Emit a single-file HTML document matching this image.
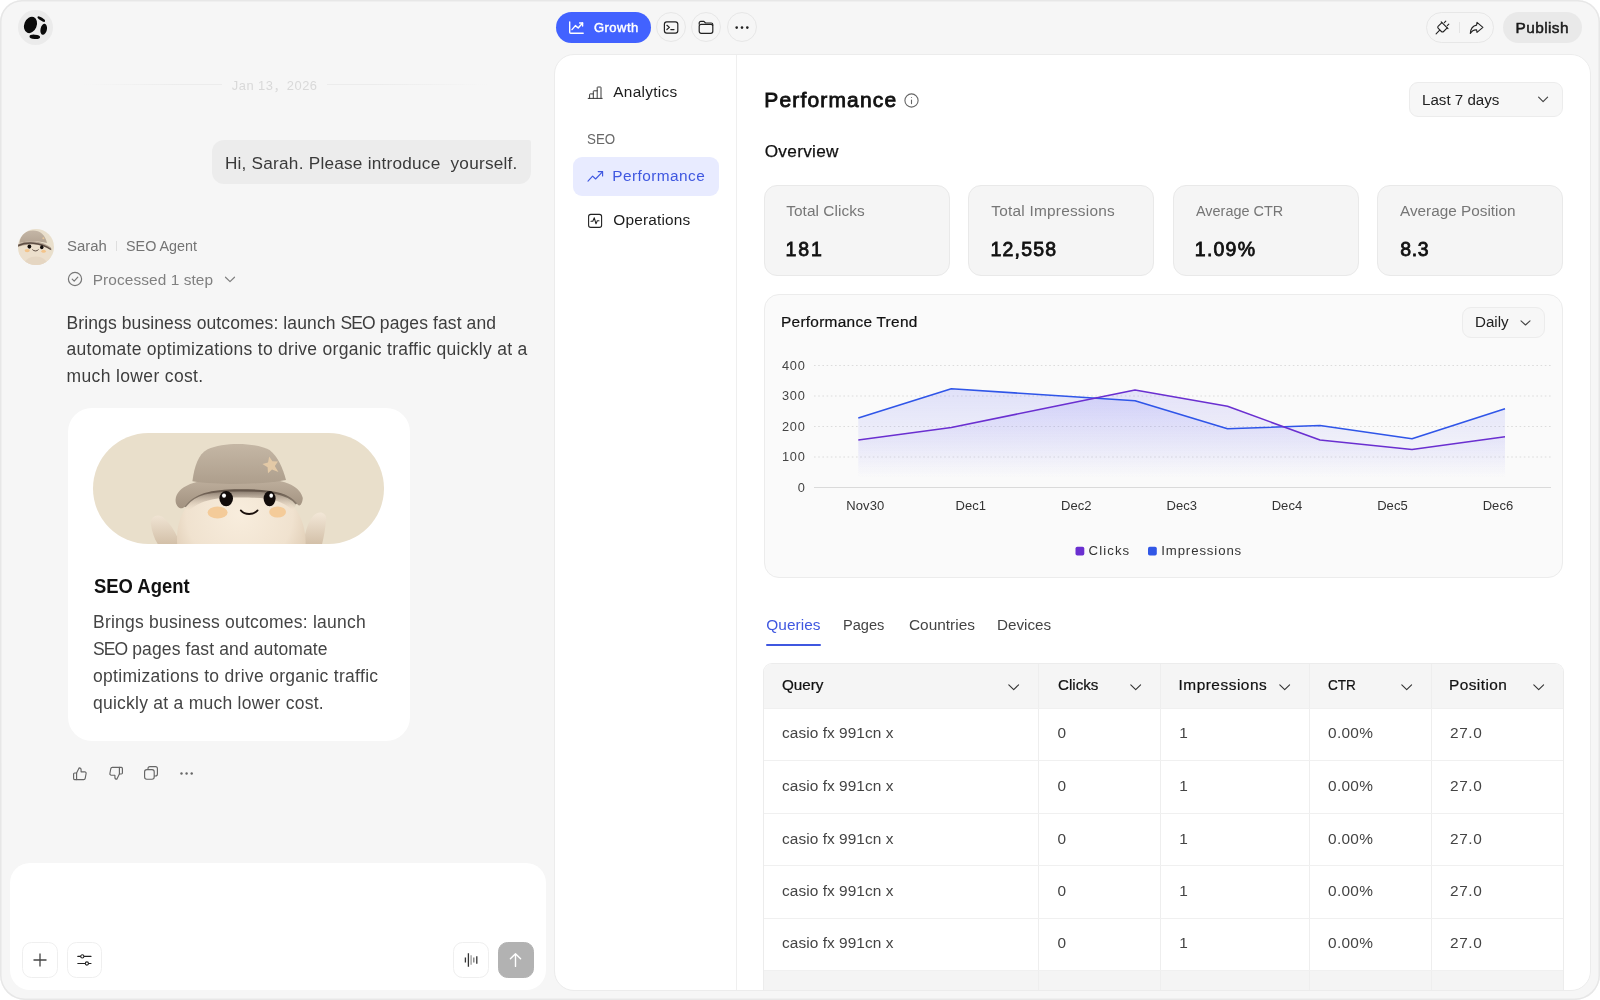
<!DOCTYPE html>
<html lang="en">
<head>
<meta charset="utf-8">
<title>Growth – Performance</title>
<style>
*{box-sizing:border-box;margin:0;padding:0}
html,body{width:1600px;height:1000px;overflow:hidden;background:#fff}
body{font-family:"Liberation Sans","Noto Sans CJK SC",sans-serif;color:#1a1a1a;position:relative;-webkit-font-smoothing:antialiased}
.abs{position:absolute}
#frame{will-change:transform;position:absolute;left:0;top:0;width:1600px;height:1000px;background:#f6f6f6;border-radius:22px 22px 25px 25px;overflow:hidden;box-shadow:inset 0 0 0 1.5px #e7e7e7}
.t{position:absolute;white-space:nowrap;line-height:1;transform-origin:0 50%}
svg{position:absolute;overflow:visible}
.seo{letter-spacing:-.9px}
/* top bar */
#logo{left:18px;top:10.2px;width:35.2px;height:35.2px;border-radius:50%;background:#ebebeb}
#growth{left:556px;top:12px;width:95px;height:31px;border-radius:16px;background:#4262ff}
.cbtn{top:12px;width:30px;height:30px;border-radius:50%;border:1px solid #e7e7e7;background:#f6f6f6}
#pillr{left:1426px;top:12px;width:67.5px;height:31px;border-radius:16px;border:1px solid #e7e7e7}
#publish{left:1502.5px;top:12px;width:79.5px;height:31px;border-radius:16px;background:#e9e9e9}
/* chat */
#bubble{left:212px;top:140px;width:319px;height:44px;border-radius:12px 2px 12px 12px;background:#ececec}
#card{left:68px;top:408px;width:342px;height:333px;border-radius:24px;background:#fff}
#hero{left:93px;top:433px;width:291px;height:111px;border-radius:56px;background:#e9dfcb;overflow:hidden}
#input{left:10px;top:863px;width:536px;height:127px;border-radius:20px;background:#fff}
.sbtn{top:942px;width:35px;height:36px;border-radius:9.5px;border:1px solid #efefef;background:#fff}
/* main panel */
#panel{left:554px;top:54px;width:1037px;height:937px;border-radius:20px;background:#fff;border:1px solid #ececec;overflow:hidden}
#sidediv{left:736px;top:55px;width:1px;height:935px;background:#efefef}
#active{left:573px;top:157px;width:146px;height:39px;border-radius:9px;background:#e8ebff}
.stat{top:185px;width:186px;height:91px;border-radius:13px;background:#f5f5f5;border:1px solid #e9e9e9}
#chart{left:764px;top:294px;width:799px;height:284px;border-radius:15px;background:#fafafa;border:1px solid #ececec}
.sel{border-radius:9px;background:#f7f7f7;border:1px solid #ececec}
#table{left:763px;top:663px;width:801px;height:327px;border-radius:9px 9px 0 0;background:#fff;border:1px solid #ececec;border-bottom:0;overflow:hidden}
</style>
</head>
<body>
<div id="frame">
<!-- P1S -->
<!-- top bar -->
<div class="abs" id="logo"></div>
<svg style="left:0;top:0" width="60" height="50" viewBox="0 0 60 50">
  <ellipse cx="30.5" cy="24.9" rx="6.2" ry="8.5" transform="rotate(22 30.5 24.9)" fill="#0a0a0a"/>
  <ellipse cx="43.7" cy="29.3" rx="3.2" ry="5.55" transform="rotate(12 43.7 29.3)" fill="#0a0a0a"/>
  <ellipse cx="34.8" cy="36.8" rx="5.3" ry="2.15" transform="rotate(4 34.8 36.8)" fill="#0a0a0a"/>
  <ellipse cx="41.3" cy="19.05" rx="4.4" ry="1.5" transform="rotate(33 41.3 19.05)" fill="#0a0a0a"/>
</svg>
<div class="abs" id="growth"></div>
<svg style="left:568px;top:19px" width="17" height="17" viewBox="0 0 17 17" fill="none" stroke="#fff" stroke-width="1.4" stroke-linecap="round" stroke-linejoin="round">
  <path d="M1.7 3V13.2a1 1 0 0 0 1 1H15.2"/><path d="M4 10.6l3.4-4 2.8 2.4 4.4-5"/><path d="M11.6 4h3v3"/>
</svg>
<div class="abs cbtn" style="left:656px"></div>
<div class="abs cbtn" style="left:691px"></div>
<div class="abs cbtn" style="left:727px"></div>
<svg style="left:663px;top:20px" width="16" height="15" viewBox="0 0 16 15" fill="none" stroke="#222" stroke-width="1.2" stroke-linecap="round" stroke-linejoin="round">
  <rect x="1.4" y="1.9" width="13.4" height="11.2" rx="2.4"/><path d="M3.9 5.3l2.5 2.1-2.5 2.1"/><path d="M7.8 9.6h3.2"/>
</svg>
<svg style="left:698px;top:20px" width="16" height="15" viewBox="0 0 16 15" fill="none" stroke="#222" stroke-width="1.2" stroke-linecap="round" stroke-linejoin="round">
  <path d="M1.2 4.2V3a1.6 1.6 0 0 1 1.6-1.6h3.1l1.6 1.6h5.7a1.6 1.6 0 0 1 1.6 1.6v.6"/><rect x="1.2" y="4.3" width="13.6" height="9" rx="2"/>
</svg>
<svg style="left:735px;top:26px" width="14" height="3" viewBox="0 0 14 3" fill="#222"><circle cx="1.7" cy="1.6" r="1.3"/><circle cx="7" cy="1.6" r="1.3"/><circle cx="12.3" cy="1.6" r="1.3"/></svg>
<div class="abs" id="pillr"></div>
<div class="abs" style="left:1459px;top:22px;width:1px;height:11px;background:#e4e4e4"></div>
<svg style="left:0;top:0" width="1600" height="60" viewBox="0 0 1600 60" fill="none" stroke="#222" stroke-width="1.1" stroke-linecap="round" stroke-linejoin="round">
  <path d="M1441.2 21.8L1448 28.6"/><path d="M1441.9 22.6L1438.3 26.2Q1437.2 27.3 1438.3 28.4L1441.4 31.5Q1442.5 32.6 1443.6 31.5L1447.2 27.9"/><path d="M1444.3 22.6L1445.8 21.1M1447.3 25.6L1448.8 24.1M1439.7 30.2L1436.1 33.8"/>
  <path d="M1477 22.4L1482.9 27.3L1477 32.3L1476.6 29.9C1473.8 29.7 1471.8 30.9 1470.3 33.5C1470.6 28.7 1472.8 25.7 1476.6 25.1Z"/>
</svg>
<div class="abs" id="publish"></div>

<!-- chat -->
<div class="abs" style="left:84px;top:84px;width:138px;height:1px;background:linear-gradient(90deg,rgba(236,236,236,0),#ececec 70%)"></div>
<div class="abs" style="left:327px;top:84px;width:160px;height:1px;background:linear-gradient(90deg,#ececec 30%,rgba(236,236,236,0))"></div>
<div class="abs" id="bubble"></div>
<svg style="left:17.5px;top:228.5px" width="36" height="36" viewBox="0 0 36 36">
<defs><clipPath id="avc"><circle cx="18" cy="18" r="18"/></clipPath>
<linearGradient id="avh" x1="0" y1="2" x2="0" y2="15" gradientUnits="userSpaceOnUse"><stop offset="0" stop-color="#c3b5a5"/><stop offset="1" stop-color="#b3a392"/></linearGradient></defs>
<g clip-path="url(#avc)">
<rect width="36" height="36" fill="#e9dfcc"/>
<path d="M-1 37C-3 22 6 12 16 12C27 12 34 22 33 37Z" fill="#ecdfcc"/>
<path d="M4 38C6 30 14 26 22 28C28 30 30 34 30 38Z" fill="#e2d1bd" opacity=".7"/>
<path d="M1.5 14C2 6 8 1.5 15 1.5C22 1.5 27.5 6 29 14C20 11.5 10 11.5 1.5 14Z" fill="url(#avh)"/>
<path d="M-1 16C6 11 22 10.5 33 18.5L33.5 21.5C24 14 8 14 -1 18.5Z" fill="#b5a595"/>
<path d="M-0.5 16.8C8 12.8 22 12.6 33 20.5" fill="none" stroke="#5e4e44" stroke-width="1.5"/>
<ellipse cx="11.4" cy="17.6" rx="1.9" ry="2.1" fill="#120c0a"/>
<ellipse cx="23.8" cy="18.2" rx="1.7" ry="2" fill="#120c0a"/>
<ellipse cx="9.2" cy="21.6" rx="2.6" ry="1.6" fill="#f3c48a"/>
<ellipse cx="25.6" cy="22.2" rx="2.2" ry="1.5" fill="#f3c48a"/>
<path d="M14.6 20.8C16 22.4 19 22.4 20.3 20.8" fill="none" stroke="#3a2a22" stroke-width=".8" stroke-linecap="round"/>
<circle cx="25.4" cy="9.2" r="1" fill="#e8c79a"/>
</g>
</svg>

<div class="abs" style="left:116px;top:241px;width:1px;height:10px;background:#dedede"></div>
<svg style="left:67px;top:271px" width="16" height="16" viewBox="0 0 16 16" fill="none" stroke="#777" stroke-width="1.2" stroke-linecap="round" stroke-linejoin="round"><circle cx="8" cy="8" r="6.6"/><path d="M5.2 8.2l2 2 3.6-4"/></svg>
<svg style="left:224px;top:276px" width="12" height="7" viewBox="0 0 12 7" fill="none" stroke="#808080" stroke-width="1.2" stroke-linecap="round" stroke-linejoin="round"><path d="M1.5 1.2L6 5.6l4.5-4.4"/></svg>
<div class="abs" id="para1" style="left:66.5px;top:309.9px;width:490px;font-size:17.5px;line-height:26.6px;color:#3d3d3d;white-space:nowrap"><span class="ln" style="letter-spacing:.11px">Brings business outcomes: launch <span class="seo">SEO</span> pages fast and</span><br><span class="ln" style="letter-spacing:.28px">automate optimizations to drive organic traffic quickly at a</span><br><span class="ln" style="letter-spacing:.36px">much lower cost.</span></div>
<div class="abs" id="card"></div>
<div class="abs" id="hero"><svg style="left:0;top:0" width="291" height="111" viewBox="67 65 1455 555">
<defs>
<radialGradient id="hb" cx="800" cy="470" r="380" gradientUnits="userSpaceOnUse"><stop offset="0" stop-color="#f8eddd"/><stop offset=".7" stop-color="#f0e2cf"/><stop offset="1" stop-color="#dfccb4"/></radialGradient>
<linearGradient id="hh" x1="0" y1="110" x2="0" y2="330" gradientUnits="userSpaceOnUse"><stop offset="0" stop-color="#c6b8a6"/><stop offset="1" stop-color="#ac9d8b"/></linearGradient>
<linearGradient id="hbr" x1="0" y1="290" x2="0" y2="440" gradientUnits="userSpaceOnUse"><stop offset="0" stop-color="#bfb09e"/><stop offset="1" stop-color="#a29280"/></linearGradient>
<linearGradient id="hs" x1="0" y1="340" x2="0" y2="450" gradientUnits="userSpaceOnUse"><stop offset="0" stop-color="#4e4036" stop-opacity=".85"/><stop offset="1" stop-color="#cdb9a2" stop-opacity="0"/></linearGradient>
<linearGradient id="ha" x1="0" y1="460" x2="0" y2="620" gradientUnits="userSpaceOnUse"><stop offset="0" stop-color="#f3e8d8"/><stop offset="1" stop-color="#d3c0a8"/></linearGradient>
</defs>
<path d="M357 525C348 484 392 462 424 492C456 522 486 566 502 622L392 622C372 592 362 556 357 525Z" fill="url(#ha)"/>
<path d="M1232 502C1240 466 1200 448 1170 478C1142 508 1128 560 1118 622L1212 622C1222 584 1228 542 1232 502Z" fill="url(#ha)"/>
<path d="M488 622C476 470 560 322 800 318C1042 324 1134 474 1130 622Z" fill="url(#hb)"/>
<path d="M520 432C570 352 660 338 800 338C950 340 1040 358 1088 414L1066 452C1000 392 930 388 800 388C670 388 600 402 540 462Z" fill="url(#hs)"/>
<path d="M528 428C574 366 650 350 800 350C950 350 1040 364 1082 414" fill="none" stroke="#4a3c32" stroke-width="14" stroke-linecap="round" opacity=".55"/>
<path d="M480 398C488 336 560 292 800 284C1042 288 1102 336 1116 390C1114 424 1096 442 1084 412C1040 360 950 346 800 346C650 346 574 368 524 434C506 454 478 432 480 398Z" fill="url(#hbr)"/>
<path d="M564 306C574 232 592 172 640 146C722 110 880 112 950 150C992 182 1016 240 1032 300C900 324 700 326 564 306Z" fill="url(#hh)"/>
<path d="M948 182l16 24 28 2-16 22 18 30-32-12-20 18-2-30-26-16 28-8z" fill="#e3c9a6"/>
<ellipse cx="690" cy="462" rx="50" ry="30" fill="#f4c892" opacity=".9"/>
<ellipse cx="990" cy="460" rx="42" ry="28" fill="#f4c892" opacity=".9"/>
<ellipse cx="733" cy="393" rx="34" ry="38" fill="#120c0a"/>
<ellipse cx="950" cy="393" rx="30" ry="38" fill="#120c0a"/>
<ellipse cx="722" cy="378" rx="10" ry="11" fill="#fff"/>
<ellipse cx="958" cy="378" rx="9" ry="11" fill="#fff"/>
<path d="M806 452C826 476 870 476 890 452" fill="none" stroke="#1a100c" stroke-width="9" stroke-linecap="round"/>
</svg>
</div>
<div class="abs" id="para2" style="left:93px;top:609.3px;width:310px;font-size:17.5px;line-height:26.75px;color:#444;white-space:nowrap"><span class="ln" style="letter-spacing:.23px">Brings business outcomes: launch</span><br><span class="ln" style="letter-spacing:.12px"><span class="seo">SEO</span> pages fast and automate</span><br><span class="ln" style="letter-spacing:.3px">optimizations to drive organic traffic</span><br><span class="ln" style="letter-spacing:.25px">quickly at a much lower cost.</span></div>
<!-- reactions -->
<svg style="left:72px;top:765.6px" width="16" height="16" viewBox="0 0 16 16" fill="none" stroke="#666" stroke-width="1.15" stroke-linecap="round" stroke-linejoin="round"><path d="M4.6 7v6.6H2.6a1 1 0 0 1-1-1V8a1 1 0 0 1 1-1z"/><path d="M4.6 7l2.6-5.2c1.1 0 1.9.9 1.9 2v2h3.6a1.4 1.4 0 0 1 1.4 1.7l-.9 4.9a1.5 1.5 0 0 1-1.5 1.2H4.6"/></svg>
<svg style="left:108px;top:765px" width="16" height="16" viewBox="0 0 16 16" fill="none" stroke="#666" stroke-width="1.15" stroke-linecap="round" stroke-linejoin="round"><g transform="rotate(180 8 8)"><path d="M4.6 7v6.6H2.6a1 1 0 0 1-1-1V8a1 1 0 0 1 1-1z"/><path d="M4.6 7l2.6-5.2c1.1 0 1.9.9 1.9 2v2h3.6a1.4 1.4 0 0 1 1.4 1.7l-.9 4.9a1.5 1.5 0 0 1-1.5 1.2H4.6"/></g></svg>
<svg style="left:143px;top:765px" width="16" height="16" viewBox="0 0 16 16" fill="none" stroke="#666" stroke-width="1.15" stroke-linecap="round" stroke-linejoin="round"><rect x="1.6" y="4.6" width="9.6" height="9.6" rx="2.2"/><path d="M5 4.4V3.6a2 2 0 0 1 2-2h5.4a2 2 0 0 1 2 2V9a2 2 0 0 1-2 2h-1"/></svg>
<svg style="left:180px;top:772px" width="13" height="3" viewBox="0 0 13 3" fill="#666"><circle cx="1.5" cy="1.5" r="1.2"/><circle cx="6.6" cy="1.5" r="1.2"/><circle cx="11.7" cy="1.5" r="1.2"/></svg>
<!-- input -->
<div class="abs" id="input"></div>
<div class="abs sbtn" style="left:22px;width:36px"></div>
<div class="abs sbtn" style="left:67px;width:35px"></div>
<div class="abs sbtn" style="left:453px;width:36px"></div>
<div class="abs sbtn" style="left:498px;width:36px;background:#b2b2b2;border-color:#b2b2b2"></div>
<svg style="left:33px;top:953px" width="14" height="14" viewBox="0 0 14 14" fill="none" stroke="#444" stroke-width="1.3" stroke-linecap="butt"><path d="M7 0.5v13M0.5 7h13"/></svg>
<svg style="left:77px;top:952px" width="15" height="15" viewBox="0 0 15 15" fill="none" stroke="#222" stroke-width="1.1" stroke-linecap="round"><path d="M0.8 4.4h3M7 4.4H14M0.8 11.5h7.6M11.4 11.5H14"/><circle cx="5.3" cy="4.4" r="1.6" fill="#fff"/><circle cx="9.9" cy="11.5" r="1.6" fill="#fff"/></svg>
<svg style="left:464px;top:952px" width="14" height="16" viewBox="0 0 14 16" fill="none" stroke="#333" stroke-width="1.3" stroke-linecap="butt"><path d="M1.4 5.4v5.2M4.4 1.2v13.6M12.8 4.2v7.6"/><path d="M7.1 3.2v9.6" stroke="#9a9a9a"/><path d="M9.8 5.4v5.2" stroke="#777"/></svg>
<svg style="left:508px;top:952px" width="15" height="16" viewBox="0 0 15 16" fill="none" stroke="#fff" stroke-width="1.4" stroke-linecap="round" stroke-linejoin="round"><path d="M7.5 14.4V1.8M2.4 6.8l5.1-5.1 5.1 5.1"/></svg>
<!-- P1E -->
<!-- P2S -->
<div class="abs" id="panel"></div>
<div class="abs" id="sidediv"></div>
<svg style="left:587px;top:85px" width="16" height="15" viewBox="0 0 16 15" fill="none" stroke="#3a3a3a" stroke-width="1" stroke-linecap="round" stroke-linejoin="round"><path d="M1.2 13.4h14"/><path d="M2.6 13.4V9.4a.5.5 0 0 1 .5-.5h3.2"/><path d="M6.3 13.4V6.3a.5.5 0 0 1 .5-.5h3.4"/><path d="M10.2 13.4V2.5a.5.5 0 0 1 .5-.5h2.8a.5.5 0 0 1 .5.5V13.4"/></svg>
<div class="abs" id="active"></div>
<svg style="left:587px;top:170px" width="17" height="13" viewBox="0 0 17 13" fill="none" stroke="#3f57e0" stroke-width="1.15" stroke-linecap="round" stroke-linejoin="round"><path d="M1 11.2l4.6-5 3 2.8L15.4 1.8"/><path d="M11.2 1.6h4.4v4.4"/></svg>
<svg style="left:587px;top:213px" width="16" height="16" viewBox="0 0 16 16" fill="none" stroke="#222" stroke-width="1.1" stroke-linecap="round" stroke-linejoin="round"><rect x="1.6" y="1.4" width="13" height="13" rx="2.2"/><path d="M4 8.2h1.8l1.5-3.4 1.7 6 1.3-3h1.7"/></svg>
<svg style="left:904px;top:93px" width="15" height="15" viewBox="0 0 15 15" fill="none" stroke="#666" stroke-width="1.1" stroke-linecap="round"><circle cx="7.5" cy="7.5" r="6.6"/><path d="M7.5 7v3.6"/><circle cx="7.5" cy="4.6" r="0.5" fill="#666" stroke="none"/></svg>
<div class="abs sel" style="left:1409px;top:82px;width:154px;height:35px"></div>
<svg style="left:1537px;top:96px" width="12" height="7" viewBox="0 0 12 7" fill="none" stroke="#444" stroke-width="1.15" stroke-linecap="round" stroke-linejoin="round"><path d="M1.6 1.2L6.1 5.7l4.5-4.5"/></svg>
<div class="abs stat" style="left:764px"></div>
<div class="abs stat" style="left:968px"></div>
<div class="abs stat" style="left:1173px"></div>
<div class="abs stat" style="left:1377.4px"></div>
<div class="abs" id="chart"></div>
<div class="abs sel" style="left:1462px;top:307px;width:83px;height:31px"></div>
<svg style="left:1520px;top:320px" width="11" height="6" viewBox="0 0 11 6" fill="none" stroke="#444" stroke-width="1.1" stroke-linecap="round" stroke-linejoin="round"><path d="M1 0.8L5.5 5l4.5-4.2"/></svg>
<svg style="left:0;top:0" width="1600" height="1000" viewBox="0 0 1600 1000">
<defs><linearGradient id="gb" x1="0" y1="388" x2="0" y2="478" gradientUnits="userSpaceOnUse"><stop offset="0" stop-color="#4f55f5" stop-opacity=".15"/><stop offset="1" stop-color="#4f55f5" stop-opacity="0"/></linearGradient><linearGradient id="gp" x1="0" y1="390" x2="0" y2="478" gradientUnits="userSpaceOnUse"><stop offset="0" stop-color="#5b50f2" stop-opacity=".14"/><stop offset="1" stop-color="#5b50f2" stop-opacity="0"/></linearGradient></defs>
<line x1="814" y1="365.5" x2="1551" y2="365.5" stroke="#dcdcdc" stroke-width="1" stroke-dasharray="1.6 2.6"/>
<line x1="814" y1="396" x2="1551" y2="396" stroke="#dcdcdc" stroke-width="1" stroke-dasharray="1.6 2.6"/>
<line x1="814" y1="426.5" x2="1551" y2="426.5" stroke="#dcdcdc" stroke-width="1" stroke-dasharray="1.6 2.6"/>
<line x1="814" y1="457" x2="1551" y2="457" stroke="#dcdcdc" stroke-width="1" stroke-dasharray="1.6 2.6"/>
<line x1="814" y1="487.5" x2="1551" y2="487.5" stroke="#dadada" stroke-width="1"/>
<polygon points="858.3,418 951.3,388.8 1043,394.8 1135,400.8 1227.5,428.8 1320,425.5 1412,438.8 1505,408.8 1505,488 858.3,488" fill="url(#gb)"/>
<polygon points="858.3,440 951.3,427.5 1043,408.8 1135,390 1227.5,406.3 1320,440 1412,449.5 1505,436.8 1505,488 858.3,488" fill="url(#gp)"/>
<polyline points="858.3,418 951.3,388.8 1043,394.8 1135,400.8 1227.5,428.8 1320,425.5 1412,438.8 1505,408.8" fill="none" stroke="#2f55e8" stroke-width="1.6" stroke-linejoin="round"/>
<polyline points="858.3,440 951.3,427.5 1043,408.8 1135,390 1227.5,406.3 1320,440 1412,449.5 1505,436.8" fill="none" stroke="#6a2fd0" stroke-width="1.6" stroke-linejoin="round"/>
<text x="805.6" y="369.8" text-anchor="end" font-size="12.8" letter-spacing=".75" fill="#444">400</text>
<text x="805.6" y="400.3" text-anchor="end" font-size="12.8" letter-spacing=".75" fill="#444">300</text>
<text x="805.6" y="430.8" text-anchor="end" font-size="12.8" letter-spacing=".75" fill="#444">200</text>
<text x="805.6" y="461.3" text-anchor="end" font-size="12.8" letter-spacing=".75" fill="#444">100</text>
<text x="805.6" y="491.8" text-anchor="end" font-size="12.8" letter-spacing=".75" fill="#444">0</text>
<text x="865.3" y="509.8" text-anchor="middle" font-size="13" letter-spacing=".1" fill="#333">Nov30</text>
<text x="970.8" y="509.8" text-anchor="middle" font-size="13" letter-spacing=".1" fill="#333">Dec1</text>
<text x="1076.3" y="509.8" text-anchor="middle" font-size="13" letter-spacing=".1" fill="#333">Dec2</text>
<text x="1181.8" y="509.8" text-anchor="middle" font-size="13" letter-spacing=".1" fill="#333">Dec3</text>
<text x="1287" y="509.8" text-anchor="middle" font-size="13" letter-spacing=".1" fill="#333">Dec4</text>
<text x="1392.5" y="509.8" text-anchor="middle" font-size="13" letter-spacing=".1" fill="#333">Dec5</text>
<text x="1498" y="509.8" text-anchor="middle" font-size="13" letter-spacing=".1" fill="#333">Dec6</text>
<rect x="1075.5" y="546.8" width="8.8" height="8.8" rx="1.8" fill="#6a2fd0"/><text x="1088.6" y="554.8" font-size="13.2" fill="#333" textLength="40.6" lengthAdjust="spacing">Clicks</text>
<rect x="1148" y="546.8" width="8.8" height="8.8" rx="1.8" fill="#3157e6"/><text x="1161.2" y="554.8" font-size="13.2" fill="#333" textLength="80" lengthAdjust="spacing">Impressions</text>
</svg>
<div class="abs" style="left:766px;top:644px;width:55px;height:2px;border-radius:1px;background:#3f57e0"></div>
<div class="abs" id="table"></div>
<div class="abs" style="left:764px;top:664px;width:799px;height:44px;background:#f5f5f5;border-radius:8px 8px 0 0"></div>
<div class="abs" style="left:764px;top:971px;width:799px;height:19px;background:#f4f4f4"></div>
<div class="abs" style="left:1038px;top:664px;width:1px;height:326px;background:#eeeeee"></div>
<div class="abs" style="left:1160px;top:664px;width:1px;height:326px;background:#eeeeee"></div>
<div class="abs" style="left:1309px;top:664px;width:1px;height:326px;background:#eeeeee"></div>
<div class="abs" style="left:1431px;top:664px;width:1px;height:326px;background:#eeeeee"></div>
<div class="abs" style="left:764px;top:708px;width:799px;height:1px;background:#f0f0f0"></div>
<div class="abs" style="left:764px;top:760px;width:799px;height:1px;background:#f0f0f0"></div>
<div class="abs" style="left:764px;top:813px;width:799px;height:1px;background:#f0f0f0"></div>
<div class="abs" style="left:764px;top:865px;width:799px;height:1px;background:#f0f0f0"></div>
<div class="abs" style="left:764px;top:918px;width:799px;height:1px;background:#f0f0f0"></div>
<div class="abs" style="left:764px;top:970px;width:799px;height:1px;background:#f0f0f0"></div>
<svg style="left:1008px;top:683.5px" width="12" height="7" viewBox="0 0 12 7" fill="none" stroke="#333" stroke-width="1.1" stroke-linecap="round" stroke-linejoin="round"><path d="M0.8 0.8L5.7 5.6l4.9-4.8"/></svg>
<svg style="left:1130px;top:683.5px" width="12" height="7" viewBox="0 0 12 7" fill="none" stroke="#333" stroke-width="1.1" stroke-linecap="round" stroke-linejoin="round"><path d="M0.8 0.8L5.7 5.6l4.9-4.8"/></svg>
<svg style="left:1279px;top:683.5px" width="12" height="7" viewBox="0 0 12 7" fill="none" stroke="#333" stroke-width="1.1" stroke-linecap="round" stroke-linejoin="round"><path d="M0.8 0.8L5.7 5.6l4.9-4.8"/></svg>
<svg style="left:1400.5px;top:683.5px" width="12" height="7" viewBox="0 0 12 7" fill="none" stroke="#333" stroke-width="1.1" stroke-linecap="round" stroke-linejoin="round"><path d="M0.8 0.8L5.7 5.6l4.9-4.8"/></svg>
<svg style="left:1533px;top:683.5px" width="12" height="7" viewBox="0 0 12 7" fill="none" stroke="#333" stroke-width="1.1" stroke-linecap="round" stroke-linejoin="round"><path d="M0.8 0.8L5.7 5.6l4.9-4.8"/></svg>
<div class="t" id="tgrowth" style="left:593.9px;top:21px;font-size:13px;color:#fff;letter-spacing:0.506px;-webkit-text-stroke:.45px #fff">Growth</div>
<div class="t" id="tpublish" style="left:1515.5px;top:20px;font-size:15.4px;color:#1a1a1a;letter-spacing:0.414px;-webkit-text-stroke:.5px #1a1a1a">Publish</div>
<div class="t" id="tdate" style="left:231.8px;top:80px;font-size:12.9px;color:#d9d9d9;letter-spacing:0.49px">Jan 13，2026</div>
<div class="t" id="tbubble" style="left:224.9px;top:155px;font-size:17.2px;color:#3a3a3a;letter-spacing:0.236px">Hi, Sarah. Please introduce&nbsp; yourself.</div>
<div class="t" id="tsarah" style="left:67.0px;top:238px;font-size:15.4px;color:#747474;transform:scaleX(0.9689)">Sarah</div>
<div class="t" id="tseoa" style="left:126.25px;top:238px;font-size:15.4px;color:#747474;transform:scaleX(0.9328)">SEO Agent</div>
<div class="t" id="tproc" style="left:92.75px;top:272px;font-size:15.4px;color:#808080;letter-spacing:0.093px">Processed 1 step</div>
<div class="t" id="tcardh" style="left:93.75px;top:577px;font-size:19.5px;color:#111;font-weight:700;transform:scaleX(0.9453)">SEO Agent</div>
<div class="t" id="tanalytics" style="left:613.25px;top:84px;font-size:15.4px;color:#1c1c1c;letter-spacing:0.295px">Analytics</div>
<div class="t" id="tseo" style="left:586.75px;top:131px;font-size:15.4px;color:#686868;transform:scaleX(0.8684)">SEO</div>
<div class="t" id="tperf" style="left:612.25px;top:168px;font-size:15.4px;color:#3f57e0;letter-spacing:0.445px">Performance</div>
<div class="t" id="tops" style="left:613.25px;top:212px;font-size:15.4px;color:#1c1c1c;letter-spacing:0.184px">Operations</div>
<div class="t" id="th1" style="left:764.3px;top:89px;font-size:21px;color:#111;letter-spacing:1.156px;-webkit-text-stroke:.85px #111">Performance</div>
<div class="t" id="tlast" style="left:1421.52px;top:92px;font-size:15.4px;color:#222;transform:scaleX(0.9838)">Last 7 days</div>
<div class="t" id="tover" style="left:764.7px;top:143px;font-size:17.2px;color:#111;letter-spacing:0.312px;-webkit-text-stroke:.25px #111">Overview</div>
<div class="t" id="sl0" style="left:786.25px;top:203px;font-size:15.4px;color:#767676;letter-spacing:0.056px">Total Clicks</div>
<div class="t" id="sl1" style="left:991.25px;top:203px;font-size:15.4px;color:#767676;letter-spacing:0.231px">Total Impressions</div>
<div class="t" id="sl2" style="left:1195.5px;top:203px;font-size:15.4px;color:#767676;transform:scaleX(0.9371)">Average CTR</div>
<div class="t" id="sl3" style="left:1400.0px;top:203px;font-size:15.4px;color:#767676;transform:scaleX(0.9955)">Average Position</div>
<div class="t" id="sv0" style="left:785.55px;top:240px;font-size:19.5px;color:#111;letter-spacing:1.855px;-webkit-text-stroke:.8px #111">181</div>
<div class="t" id="sv1" style="left:990.55px;top:240px;font-size:19.5px;color:#111;letter-spacing:1.17px;-webkit-text-stroke:.8px #111">12,558</div>
<div class="t" id="sv2" style="left:1194.8px;top:240px;font-size:19.5px;color:#111;letter-spacing:1.237px;-webkit-text-stroke:.8px #111">1.09%</div>
<div class="t" id="sv3" style="left:1400.3px;top:240px;font-size:19.5px;color:#111;letter-spacing:0.569px;-webkit-text-stroke:.8px #111">8.3</div>
<div class="t" id="ttrend" style="left:781px;top:314px;font-size:15.4px;color:#111;letter-spacing:0.284px;-webkit-text-stroke:.22px #111">Performance Trend</div>
<div class="t" id="tdaily" style="left:1475.27px;top:314px;font-size:15.4px;color:#222;transform:scaleX(0.9847)">Daily</div>
<div class="t" id="tab0" style="left:766.25px;top:617px;font-size:15.4px;color:#3f57e0;letter-spacing:0.051px">Queries</div>
<div class="t" id="tab1" style="left:842.8px;top:617px;font-size:15.4px;color:#444;transform:scaleX(0.9489)">Pages</div>
<div class="t" id="tab2" style="left:909px;top:617px;font-size:15.4px;color:#444;letter-spacing:0.01px">Countries</div>
<div class="t" id="tab3" style="left:997.26px;top:617px;font-size:15.4px;color:#444;transform:scaleX(0.9899)">Devices</div>
<div class="t" id="th0x" style="left:782.0px;top:677px;font-size:15.4px;color:#111;transform:scaleX(0.989);-webkit-text-stroke:.22px #111">Query</div>
<div class="t" id="th1x" style="left:1057.5px;top:677px;font-size:15.4px;color:#111;transform:scaleX(0.9856);-webkit-text-stroke:.22px #111">Clicks</div>
<div class="t" id="th2x" style="left:1178.5px;top:677px;font-size:15.4px;color:#111;letter-spacing:0.523px;-webkit-text-stroke:.22px #111">Impressions</div>
<div class="t" id="th3x" style="left:1328.0px;top:677px;font-size:15.4px;color:#111;transform:scaleX(0.8805);-webkit-text-stroke:.22px #111">CTR</div>
<div class="t" id="th4x" style="left:1449px;top:677px;font-size:15.4px;color:#111;letter-spacing:0.437px;-webkit-text-stroke:.22px #111">Position</div>
<div class="t" id="c0r0" style="left:782px;top:725px;font-size:15.4px;color:#444;letter-spacing:0.073px">casio fx 991cn x</div>
<div class="t" id="c1r0" style="left:1057.5px;top:725px;font-size:15.4px;color:#444">0</div>
<div class="t" id="c2r0" style="left:1179.2px;top:725px;font-size:15.4px;color:#444">1</div>
<div class="t" id="c3r0" style="left:1328px;top:725px;font-size:15.4px;color:#444;letter-spacing:0.324px">0.00%</div>
<div class="t" id="c4r0" style="left:1450px;top:725px;font-size:15.4px;color:#444;letter-spacing:0.618px">27.0</div>
<div class="t" id="c0r1" style="left:782px;top:778px;font-size:15.4px;color:#444;letter-spacing:0.073px">casio fx 991cn x</div>
<div class="t" id="c1r1" style="left:1057.5px;top:778px;font-size:15.4px;color:#444">0</div>
<div class="t" id="c2r1" style="left:1179.2px;top:778px;font-size:15.4px;color:#444">1</div>
<div class="t" id="c3r1" style="left:1328px;top:778px;font-size:15.4px;color:#444;letter-spacing:0.324px">0.00%</div>
<div class="t" id="c4r1" style="left:1450px;top:778px;font-size:15.4px;color:#444;letter-spacing:0.618px">27.0</div>
<div class="t" id="c0r2" style="left:782px;top:831px;font-size:15.4px;color:#444;letter-spacing:0.073px">casio fx 991cn x</div>
<div class="t" id="c1r2" style="left:1057.5px;top:831px;font-size:15.4px;color:#444">0</div>
<div class="t" id="c2r2" style="left:1179.2px;top:831px;font-size:15.4px;color:#444">1</div>
<div class="t" id="c3r2" style="left:1328px;top:831px;font-size:15.4px;color:#444;letter-spacing:0.324px">0.00%</div>
<div class="t" id="c4r2" style="left:1450px;top:831px;font-size:15.4px;color:#444;letter-spacing:0.618px">27.0</div>
<div class="t" id="c0r3" style="left:782px;top:883px;font-size:15.4px;color:#444;letter-spacing:0.073px">casio fx 991cn x</div>
<div class="t" id="c1r3" style="left:1057.5px;top:883px;font-size:15.4px;color:#444">0</div>
<div class="t" id="c2r3" style="left:1179.2px;top:883px;font-size:15.4px;color:#444">1</div>
<div class="t" id="c3r3" style="left:1328px;top:883px;font-size:15.4px;color:#444;letter-spacing:0.324px">0.00%</div>
<div class="t" id="c4r3" style="left:1450px;top:883px;font-size:15.4px;color:#444;letter-spacing:0.618px">27.0</div>
<div class="t" id="c0r4" style="left:782px;top:935px;font-size:15.4px;color:#444;letter-spacing:0.073px">casio fx 991cn x</div>
<div class="t" id="c1r4" style="left:1057.5px;top:935px;font-size:15.4px;color:#444">0</div>
<div class="t" id="c2r4" style="left:1179.2px;top:935px;font-size:15.4px;color:#444">1</div>
<div class="t" id="c3r4" style="left:1328px;top:935px;font-size:15.4px;color:#444;letter-spacing:0.324px">0.00%</div>
<div class="t" id="c4r4" style="left:1450px;top:935px;font-size:15.4px;color:#444;letter-spacing:0.618px">27.0</div>
<!-- P2E -->
<!-- SECTIONS -->
</div>
</body>
</html>
